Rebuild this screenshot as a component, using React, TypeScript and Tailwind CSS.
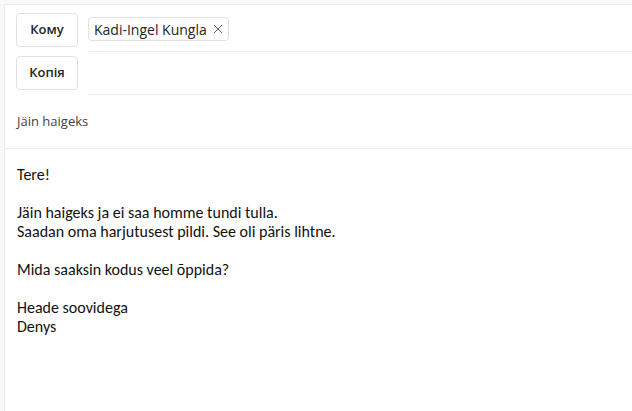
const ui = { fontFamily: '"Segoe UI", "Open Sans", "Noto Sans", sans-serif' };
const body = { fontFamily: 'Calibri, Carlito, Lato, sans-serif' };

function FieldButton({ label }: { label: string }) {
  return (
    <button className="h-[34px] w-[62px] shrink-0 rounded-[4px] border border-[#e1e1e1] bg-white text-[13px] font-semibold text-[#242424]">
      {label}
    </button>
  );
}

export default function App() {
  const lines = [
    "Tere!",
    "",
    "Jäin haigeks ja ei saa homme tundi tulla.",
    "Saadan oma harjutusest pildi. See oli päris lihtne.",
    "",
    "Mida saaksin kodus veel õppida?",
    "",
    "Heade soovidega",
    "Denys",
  ];

  return (
    <div className="h-[411px] w-[632px] overflow-hidden bg-[#f8f8f8] pl-1 pt-1" style={ui}>
      <div className="h-full border-l border-t border-[#ebebeb] bg-white">
        <div className="flex items-start gap-[10px] pl-[11px] pt-2">
          <FieldButton label="Кому" />
          <div className="flex h-[39px] flex-1 items-start border-b border-[#ebebeb] pt-1">
            <span className="flex h-[24px] items-center gap-[6px] rounded-[4px] border border-[#e1e1e1] px-[5px] text-[14px] text-[#242424]">
              Kadi-Ingel Kungla
              <svg width="10" height="10" viewBox="0 0 10 10" className="text-[#616161]">
                <path d="M1 1L9 9M9 1L1 9" stroke="currentColor" strokeWidth="1" />
              </svg>
            </span>
          </div>
        </div>
        <div className="flex items-start gap-[10px] pl-[11px] pt-1">
          <FieldButton label="Копія" />
          <div className="h-[39px] flex-1 border-b border-[#ebebeb]" />
        </div>
        <div className="flex h-[54px] items-center border-b border-[#ebebeb] pl-3 text-[13px] text-[#424242]">
          Jäin haigeks
        </div>
        <div className="pl-3 pt-[16px] text-[16px] leading-[19px] text-[#111]" style={body}>
          {lines.map((l, i) => (
            <div key={i} className="h-[19px] whitespace-nowrap">
              {l}
            </div>
          ))}
        </div>
      </div>
    </div>
  );
}
